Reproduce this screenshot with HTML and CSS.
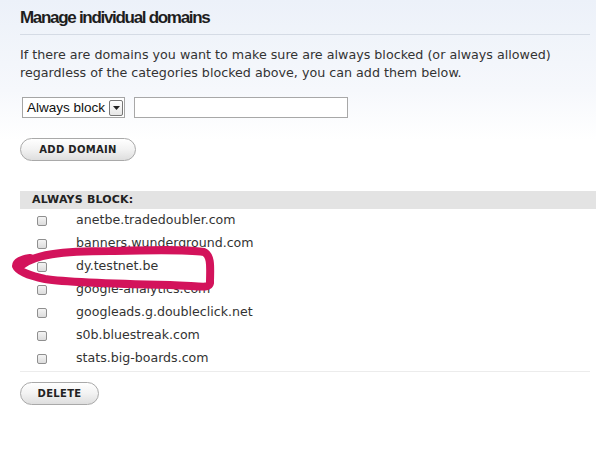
FILE: index.html
```html
<!DOCTYPE html>
<html lang="en">
<head>
    <meta charset="UTF-8">
    <title>Manage individual domains</title>
    <link rel="stylesheet" href="styles.css">
</head>
<body>
    <div class="panel">
        <h2 class="panel-title">Manage individual domains</h2>
        <p class="panel-intro">If there are domains you want to make sure are always blocked (or always allowed) regardless of the categories blocked above, you can add them below.</p>

        <div class="add-row">
            <div class="fake-select">
                <span>Always block</span>
                <span class="fake-select-btn">
                    <svg width="7" height="4" viewBox="0 0 7 4"><path d="M0 0h7L3.5 4z" fill="#222"/></svg>
                </span>
            </div>
            <input type="text" class="domain-input">
        </div>

        <button class="pill-btn add-btn">Add domain</button>

        <div class="list-head">Always block:</div>
        <ul class="domain-list">
            <li><input type="checkbox"><span>anetbe.tradedoubler.com</span></li>
            <li><input type="checkbox"><span>banners.wunderground.com</span></li>
            <li><input type="checkbox"><span>dy.testnet.be</span></li>
            <li><input type="checkbox"><span>google-analytics.com</span></li>
            <li><input type="checkbox"><span>googleads.g.doubleclick.net</span></li>
            <li><input type="checkbox"><span>s0b.bluestreak.com</span></li>
            <li><input type="checkbox"><span>stats.big-boards.com</span></li>
        </ul>

        <button class="pill-btn delete-btn">Delete</button>

        <!-- hand drawn marker around the highlighted entry -->
        <svg class="scribble" width="230" height="60" viewBox="0 0 230 60">
            <path d="M22 26 C 34 16, 60 12, 110 12 C 150 11, 185 10, 204 13 C 212 17, 210 30, 210 44 C 209 50, 200 47, 170 46 C 120 45, 70 44, 45 40 C 30 37, 18 32, 16 27 C 16 23, 22 20, 30 19" fill="none" stroke="#d3135b" stroke-width="8" stroke-linecap="round" stroke-linejoin="round"/>
        </svg>
    </div>
</body>
</html>
```

FILE: styles.css
```css
body {
    margin: 0;
    padding: 0;
    background: linear-gradient(to bottom, #ecf1f9 0px, #f6f8fc 90px, #ffffff 140px);
    font-family: "DejaVu Sans", Verdana, sans-serif;
    color: #333;
    min-height: 450px;
}
.panel {
    position: relative;
    padding: 8px 0 0 20px;
}
.panel-title {
    margin: 0 6px 0 0;
    padding: 0 0 6px 0;
    font-family: "Liberation Sans", Arial, sans-serif;
    font-size: 17px;
    font-weight: bold;
    letter-spacing: -1.3px;
    color: #1e1e1e;
    border-bottom: 1px solid #d5dbe5;
}
.panel-intro {
    margin: 11px 0 0 0;
    font-size: 12.7px;
    line-height: 18px;
    color: #333;
    padding-right: 20px;
}
.add-row {
    display: flex;
    align-items: center;
    gap: 9px;
    margin: 15px 0 0 2px;
}
.fake-select {
    display: flex;
    align-items: center;
    height: 19px;
    padding: 0 1px 0 4px;
    border: 1px solid #a5a5a5;
    background: #fff;
    font-family: "Liberation Sans", Arial, sans-serif;
    font-size: 13.5px;
    color: #111;
    gap: 4px;
}
.fake-select-btn {
    display: flex;
    align-items: center;
    justify-content: center;
    width: 12px;
    height: 14px;
    border: 1px solid #777;
    border-radius: 2px;
    background: linear-gradient(#fff, #e6e6e6);
}
.domain-input {
    width: 210px;
    height: 17px;
    padding: 1px;
    border: 1px solid #a8a8a8;
    margin: 0;
}
.pill-btn {
    display: block;
    height: 23px;
    border: 1px solid #a9a9a9;
    border-radius: 12px;
    background: linear-gradient(#ffffff, #f2f2f2 50%, #dedede);
    font-family: "DejaVu Sans", Verdana, sans-serif;
    font-size: 10px;
    font-weight: bold;
    text-transform: uppercase;
    letter-spacing: 0.3px;
    color: #222;
    cursor: pointer;
}
.add-btn {
    width: 116px;
    margin-top: 20px;
}
.list-head {
    margin-top: 30px;
    height: 18px;
    line-height: 18px;
    padding-left: 12px;
    background: #e3e3e3;
    font-size: 11px;
    font-weight: bold;
    text-transform: uppercase;
    color: #222;
    letter-spacing: 0.2px;
}
.domain-list {
    list-style: none;
    margin: -1px 6px 0 0;
    padding: 0 0 2px 0;
    border-bottom: 1px solid #ececec;
}
.domain-list li {
    display: flex;
    align-items: center;
    height: 23px;
    font-size: 12.6px;
    color: #333;
}
.domain-list input {
    appearance: none;
    width: 10px;
    height: 10px;
    margin: 3px 29px 0 17px;
    border: 1px solid #8f8f8f;
    border-radius: 2px;
    background: linear-gradient(#f4f4f4, #dcdcdc);
}
.delete-btn {
    width: 79px;
    margin-top: 10px;
}
.scribble {
    position: absolute;
    left: 0;
    top: 239px;
}
```
